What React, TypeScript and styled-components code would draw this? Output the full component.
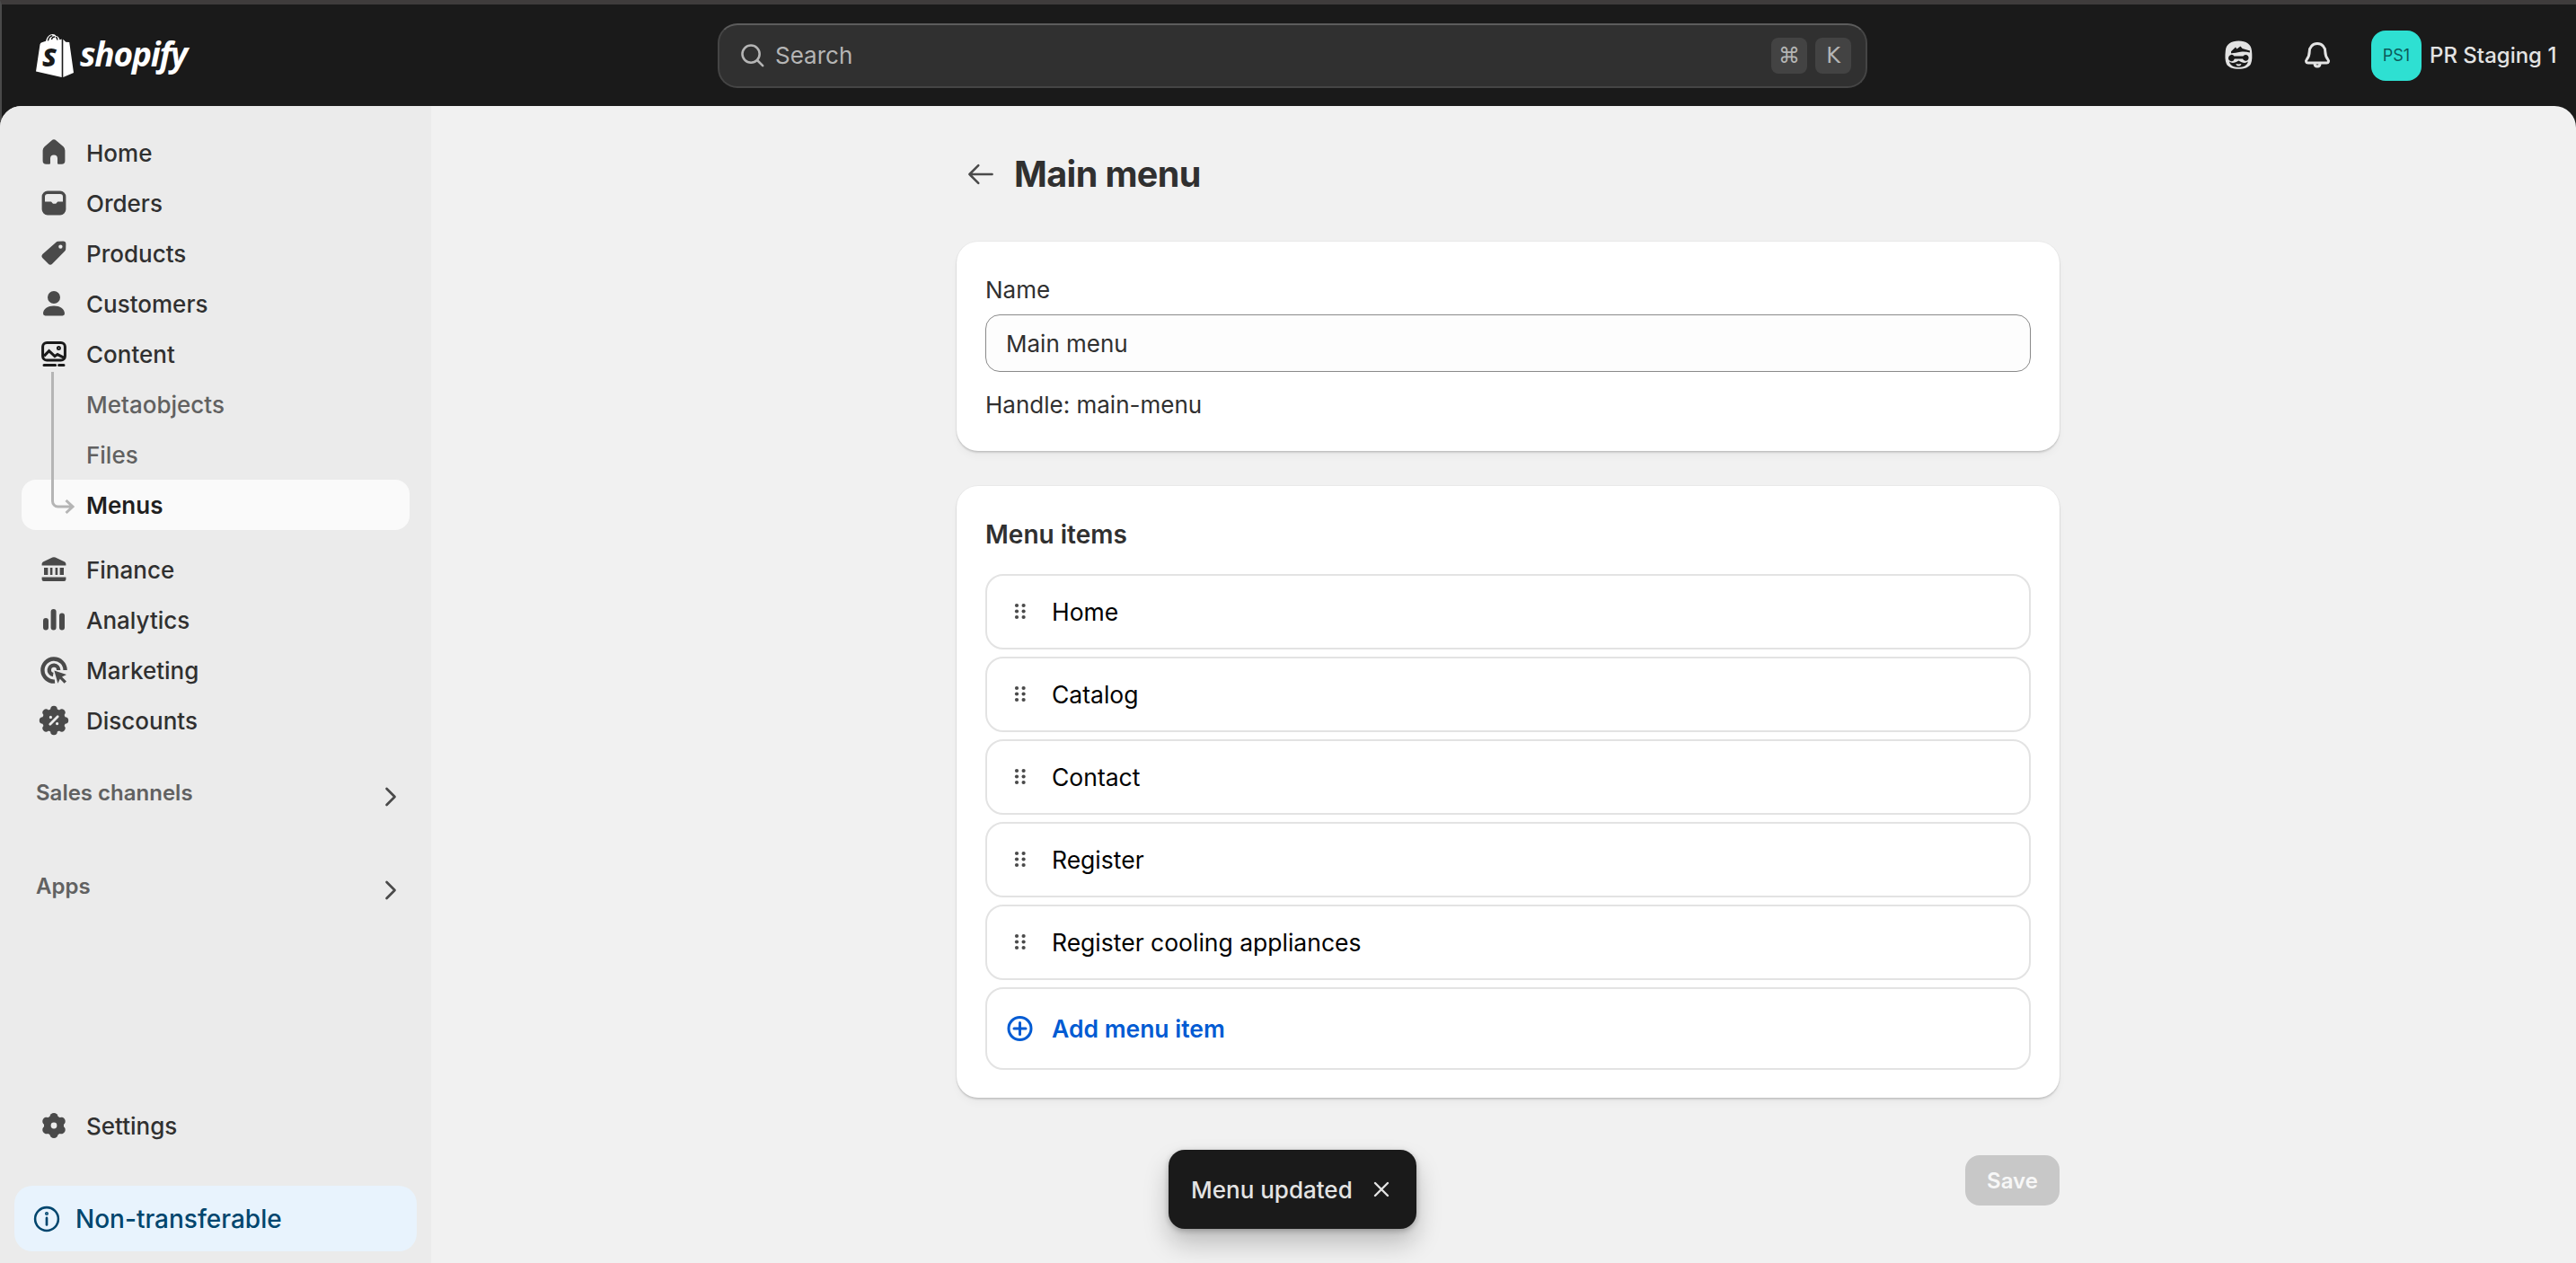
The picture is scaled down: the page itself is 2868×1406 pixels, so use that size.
import React from "react";
import styled, { createGlobalStyle } from "styled-components";

const Global = createGlobalStyle`
  html, body { margin: 0; padding: 0; height: 100%; }
  body { font-family: Inter, "Liberation Sans", sans-serif; background: #1a1a1a; overflow: hidden; }
  #root { height: 100%; }
`;

const Page = styled.div`
  height: 1406px;
  display: flex;
  flex-direction: column;
  background: #1a1a1a;
  border-top: 5px solid #3f3c3c;
  border-left: 2px solid #4a4a4a;
  box-sizing: border-box;
  position: relative;
`;

const TopBar = styled.header`
  height: 113px;
  flex: none;
  display: grid;
  grid-template-columns: 797px 1280px 1fr;
  align-items: center;
`;

const Brand = styled.div`
  display: flex;
  align-items: center;
  padding-left: 38px;
  gap: 7px;
`;

const Wordmark = styled.span`
  font-family: "Open Sans", sans-serif;
  font-style: italic;
  font-weight: 700;
  font-size: 37px;
  letter-spacing: -1.2px;
  color: #fff;
  line-height: 1;
  position: relative;
  top: -2px;
`;

const SearchBox = styled.div`
  height: 72px;
  box-sizing: border-box;
  display: flex;
  align-items: center;
  padding: 0 16px 0 21px;
  gap: 9px;
  border-radius: 22px;
  background: #303030;
  border: 2px solid #454545;
  border-top-color: #5c5c5c;
  color: #b5b5b5;
  font-size: 26px;
`;

const SearchText = styled.span`
  flex: 1;
`;

const Kbd = styled.span`
  width: 40px;
  height: 40px;
  display: flex;
  align-items: center;
  justify-content: center;
  border-radius: 8px;
  background: #434343;
  color: #b5b5b5;
  font-size: 24px;
  font-family: "DejaVu Sans", Inter, sans-serif;
`;

const TopRight = styled.div`
  display: flex;
  align-items: center;
  padding-left: 393px;
`;

const TopIcon = styled.div`
  width: 40px;
  height: 40px;
  flex: none;
  margin-right: 48px;
  &:nth-child(2) { margin-right: 40px; }
`;

const Avatar = styled.div`
  width: 56px;
  height: 56px;
  flex: none;
  border-radius: 16px;
  background: #2ee0d2;
  color: #0c5a5a;
  font-size: 18px;
  display: flex;
  align-items: center;
  justify-content: center;
`;

const ShopName = styled.span`
  margin-left: 9px;
  color: #e3e3e3;
  font-size: 24px;
  font-weight: 500;
  white-space: nowrap;
`;

const Body = styled.div`
  flex: 1;
  min-height: 0;
  display: flex;
  border-radius: 24px 24px 0 0;
  overflow: hidden;
  background: #f1f1f1;
  margin-left: -2px;
`;

const Sidebar = styled.nav`
  width: 480px;
  flex: none;
  box-sizing: border-box;
  background: #ebebeb;
  display: flex;
  flex-direction: column;
  padding: 24px 16px 13px 16px;
`;

const NavRow = styled.div<{ $active?: boolean; $sub?: boolean }>`
  height: 56px;
  flex: none;
  margin: 0 8px;
  padding-left: 16px;
  border-radius: 16px;
  display: flex;
  align-items: center;
  gap: 17px;
  position: relative;
  background: ${(p) => (p.$active ? "#fafafa" : "transparent")};
  color: ${(p) => (p.$active ? "#1f1f1f" : p.$sub ? "#616161" : "#303030")};
  font-size: 26px;
  font-weight: ${(p) => (p.$active ? 600 : 500)};
`;

const NavIcon = styled.svg`
  width: 40px;
  height: 40px;
  flex: none;
  margin-right: -1px;
  fill: #4a4a4a;
`;

const SubSpacer = styled.span`
  width: 40px;
  flex: none;
  margin-right: -1px;
`;

const TreeLine = styled.svg`
  position: absolute;
  left: 30px;
  width: 30px;
  height: 160px;
  bottom: 20px;
  fill: none;
  stroke: #b5b5b5;
  stroke-width: 3;
  overflow: visible;
`;

const SectionGap = styled.div`
  height: 16px;
  flex: none;
`;

const SectionRow = styled.div<{ $top: number }>`
  margin: ${(p) => p.$top}px 8px 0 8px;
  height: 44px;
  flex: none;
  padding: 0 6px 0 16px;
  display: flex;
  align-items: center;
  justify-content: space-between;
  color: #616161;
  font-size: 24px;
  font-weight: 600;
`;

const SideFill = styled.div`
  flex: 1;
`;

const Notice = styled.div`
  height: 73px;
  flex: none;
  margin: 39px 0 0 0;
  border-radius: 20px;
  background: #e8f3fd;
  box-sizing: border-box;
  padding-left: 21px;
  display: flex;
  align-items: center;
  gap: 17px;
  color: #00466e;
  font-size: 28px;
  font-weight: 500;
`;

const Main = styled.main`
  flex: 1;
  box-sizing: border-box;
  padding: 0 0 0 585px;
`;

const Column = styled.div`
  width: 1228px;
  display: flex;
  flex-direction: column;
`;

const TitleRow = styled.div`
  height: 151px;
  display: flex;
  align-items: center;
  padding-left: 9px;
  gap: 19px;
  box-sizing: border-box;
  color: #303030;
`;

const Title = styled.h1`
  margin: 0;
  font-size: 39.5px;
  font-weight: 700;
  letter-spacing: -0.6px;
`;

const Card = styled.section`
  background: #fff;
  border-radius: 24px;
  box-shadow: 0 2px 2px rgba(0, 0, 0, 0.14), 0 0 0 1px rgba(0, 0, 0, 0.03), 0 6px 8px rgba(0, 0, 0, 0.03);
  padding: 0 32px;
  box-sizing: border-box;
`;

const NameCard = styled(Card)`
  height: 233px;
  margin-bottom: 39px;
  padding-top: 37px;
`;

const FieldLabel = styled.div`
  color: #303030;
  font-size: 26px;
  line-height: 34px;
`;

const TextField = styled.div`
  height: 64px;
  margin-top: 10px;
  border: 1.5px solid #8a8a8a;
  border-radius: 16px;
  box-sizing: border-box;
  padding-left: 22px;
  display: flex;
  align-items: center;
  background: #fdfdfd;
  color: #303030;
  font-size: 26px;
`;

const FieldHint = styled.div`
  margin-top: 20px;
  color: #303030;
  font-size: 26px;
  line-height: 34px;
`;

const ItemsCard = styled(Card)`
  height: 681px;
  padding-top: 36px;
`;

const CardTitle = styled.h2`
  margin: 0 0 26px;
  font-size: 28px;
  font-weight: 600;
  line-height: 36px;
  color: #303030;
`;

const ItemList = styled.div`
  display: flex;
  flex-direction: column;
  gap: 8px;
`;

const ItemRow = styled.div<{ $add?: boolean }>`
  height: ${(p) => (p.$add ? 92 : 84)}px;
  flex: none;
  box-sizing: border-box;
  border: 2px solid #e3e3e3;
  border-radius: 20px;
  display: flex;
  align-items: center;
  padding-left: 17px;
  gap: 15px;
  color: ${(p) => (p.$add ? "#005bd3" : "#000")};
  font-size: 26.5px;
  font-weight: ${(p) => (p.$add ? 600 : 400)};
`;

const RowIcon = styled.svg`
  width: 40px;
  height: 40px;
  flex: none;
`;

const Footer = styled.div`
  display: flex;
  justify-content: flex-end;
  padding-top: 64px;
`;

const SaveButton = styled.button`
  width: 105px;
  height: 56px;
  border: 0;
  border-radius: 16px;
  background: #c8c8c8;
  color: #f7f7f7;
  font: 600 24px Inter, sans-serif;
`;

const Toast = styled.div`
  position: absolute;
  left: 1299px;
  top: 1275px;
  width: 276px;
  height: 88px;
  box-sizing: border-box;
  border-radius: 18px;
  background: #1a1a1a;
  color: #e3e3e3;
  display: flex;
  align-items: center;
  justify-content: space-between;
  padding: 0 29px 0 25px;
  font-size: 26px;
  font-weight: 500;
  white-space: nowrap;
  box-shadow: 0 16px 28px rgba(0, 0, 0, 0.22), 0 2px 6px rgba(0, 0, 0, 0.25);
`;

const navTop = [
  { label: "Home", d: "M8.7 3.2a2 2 0 0 1 2.6 0l4 3.4a3 3 0 0 1 .9 2.2v5.7a1.9 1.9 0 0 1-1.9 1.9h-1.8a.5.5 0 0 1-.5-.5v-2.7a2 2 0 0 0-4 0v2.7a.5.5 0 0 1-.5.5H5.7a1.9 1.9 0 0 1-1.9-1.9V8.800a3 3 0 0 1 1-2.2z" },
  { label: "Orders", d: "M6.500 3.300h7a3.200 3.200 0 0 1 3.200 3.200v7a3.200 3.200 0 0 1-3.200 3.200h-7a3.200 3.200 0 0 1-3.200-3.200v-7a3.200 3.200 0 0 1 3.200-3.200zm0 1.700a1.500 1.500 0 0 0-1.500 1.500v2.700h3.500l1 1.200h1.600l1-1.200H15V6.500A1.500 1.500 0 0 0 13.500 5z" },
  { label: "Products", d: "M11.200 3.900a1.500 1.500 0 0 1 1-.5l2.900-.100a1.600 1.600 0 0 1 1.600 1.600l-.1 2.900a1.500 1.500 0 0 1-.5 1l-6.900 7a1.700 1.700 0 0 1-2.400 0L3.800 12.800a1.700 1.700 0 0 1 0-2.400zM13.700 5.200a1.100 1.100 0 1 0 0 2.200 1.100 1.100 0 0 0 0-2.200z" },
  { label: "Customers", d: "M10 3a3.500 3.500 0 1 1 0 7 3.500 3.500 0 0 1 0-7zM10 11.200c3.300 0 6 1.700 6 4.300a1.200 1.200 0 0 1-1.200 1.200H5.200A1.200 1.200 0 0 1 4 15.500c0-2.600 2.700-4.300 6-4.300z" },
];

const navBottom = [
  { label: "Finance", d: "M9.200 3.300a2 2 0 0 1 1.600 0l5 2.300c.6.300.9.800.9 1.400v.8H3.300V7c0-.6.300-1.100.9-1.400zM4.500 9h2.200v4H4.500zM7.900 9h1.300v4H7.900zM10.800 9h1.300v4h-1.300zM13.300 9h2.200v4h-2.200zM3.300 14.200h13.400v1.300a1 1 0 0 1-1 1H4.300a1 1 0 0 1-1-1z" },
  { label: "Analytics", d: "M5.500 9A1.500 1.500 0 0 1 7 10.500v3.800a1.500 1.500 0 0 1-3 0v-3.800A1.500 1.500 0 0 1 5.500 9zM9.800 4a1.500 1.500 0 0 1 1.500 1.500v8.800a1.500 1.500 0 0 1-3 0V5.500A1.500 1.500 0 0 1 9.800 4zM14.500 6.300A1.500 1.500 0 0 1 16 7.800v6.500a1.500 1.500 0 0 1-3 0V7.800a1.500 1.500 0 0 1 1.500-1.500z" },
];

export default function App() {
  return (
    <Page>
      <Global />
      <TopBar>
        <Brand>
          <svg width="42" height="48" viewBox="0 0 42 48">
            <path fill="#fff" d="M0 41.500 4.500 11.500q.4-1.800 2-2.300L11 7.800C12 3.300 15 0 18.800 0c1.700 0 2.900.8 3.600 2 2 0 3.400 1.700 4 4.200l2.300-.7V48z" />
            <path fill="#fff" d="M30.300 5.700l3 3 3.900.4L42 43l-11.700 5z" />
            <path fill="none" stroke="#1a1a1a" strokeWidth="1.500" d="M13.400 7.400C14 4.500 16 2 18.300 1.800M17.300 6C18 4 19.800 3 21.200 3.100M22.400 3c.9 1 1.400 2.200 1.500 3.500" />
            <text x="7" y="36" fontFamily="'Open Sans', sans-serif" fontStyle="italic" fontWeight="800" fontSize="29" fill="#1a1a1a">S</text>
          </svg>
          <Wordmark>shopify</Wordmark>
        </Brand>
        <SearchBox>
          <svg width="32" height="32" viewBox="0 0 20 20" fill="none" stroke="#b5b5b5" strokeWidth="1.600" strokeLinecap="round">
            <circle cx="8.800" cy="8.800" r="6" />
            <path d="M13.300 13.300l3.700 3.700" />
          </svg>
          <SearchText>Search</SearchText>
          <Kbd>⌘</Kbd>
          <Kbd>K</Kbd>
        </SearchBox>
        <TopRight>
          <TopIcon>
            <svg width="40" height="40" viewBox="0 0 20 20">
              <path fill="#e3e3e3" d="M10.200 1.800c4.200 0 6.900 1.700 7.300 5.400.3 2.900.3 5.400-.5 7.300-.9 2-3.600 2.900-6.800 2.900s-5.900-.9-6.800-2.900c-.8-1.900-.8-4.400-.5-7.300.4-3.700 3.100-5.400 7.300-5.400z" />
              <path fill="#1a1a1a" d="M6 7.600 8.500 5.300l.7 1 2-1.600 1.100 1.300 4.200 1.300-.1 1c-1.600-.5-3.300-.7-5.200-.4-2 .3-3.700.8-5.200.7z" />
              <path fill="#1a1a1a" d="M4.600 10.800a1.700 1.700 0 0 1 3.100-.6h5a1.700 1.700 0 1 1-.2 1.600H7.900a1.700 1.700 0 0 1-3.300-1z" />
              <path fill="#1a1a1a" d="M5 13.300c1.500 1.200 3.400.6 5.200-.6 1.800 1.200 3.700 1.800 5.200.6-.3 2.100-2.300 3.200-5.200 3.200s-4.900-1.100-5.200-3.200z" />
              <path fill="#e3e3e3" d="M8.700 14.500c1 .3 2 .3 3 0-.2 1-.9 1.300-1.500 1.300s-1.300-.3-1.500-1.300z" />
            </svg>
          </TopIcon>
          <TopIcon>
            <svg width="40" height="40" viewBox="0 0 20 20" fill="none" stroke="#e3e3e3" strokeWidth="1.500" strokeLinejoin="round">
              <path d="M10 3.300c-2.700 0-4.400 2-4.400 4.500 0 2.200-.8 3.500-1.600 4.500-.5.600-.3 1.700.8 1.700h10.400c1.100 0 1.300-1.100.8-1.700-.8-1-1.600-2.300-1.600-4.500 0-2.500-1.700-4.500-4.400-4.500z" />
              <path d="M8.500 14.200c0 2.400 3 2.400 3 0" />
            </svg>
          </TopIcon>
          <Avatar>PS1</Avatar>
          <ShopName>PR Staging 1</ShopName>
        </TopRight>
      </TopBar>
      <Body>
        <Sidebar>
          {navTop.map((n) => (
            <NavRow key={n.label}>
              <NavIcon viewBox="0 0 20 20"><path fillRule="evenodd" d={n.d} /></NavIcon>
              {n.label}
            </NavRow>
          ))}
          <NavRow>
            <NavIcon viewBox="0 0 20 20">
              <g fill="none" stroke="#1a1a1a" strokeWidth="1.500">
                <rect x="3.800" y="3.700" width="12.400" height="9.800" rx="2.300" />
                <path d="M4.500 11.200 7.300 8.300l3.200 3 1.500-1 3.500 1.800" />
                <circle cx="12.700" cy="6.700" r=".5" />
                <path strokeLinecap="round" d="M4.500 16.300h6.300M12.800 16.300h2.700" />
              </g>
            </NavIcon>
            Content
          </NavRow>
          <NavRow $sub><SubSpacer />Metaobjects</NavRow>
          <NavRow $sub><SubSpacer />Files</NavRow>
          <NavRow $active>
            <TreeLine viewBox="0 0 30 160">
              <path d="M4.500 4V148a6 6 0 0 0 6 6H26M19.500 147l7.500 7-7.500 7" />
            </TreeLine>
            <SubSpacer />Menus
          </NavRow>
          <SectionGap />
          {navBottom.map((n) => (
            <NavRow key={n.label}>
              <NavIcon viewBox="0 0 20 20"><path fillRule="evenodd" d={n.d} /></NavIcon>
              {n.label}
            </NavRow>
          ))}
          <NavRow>
            <NavIcon viewBox="0 0 20 20">
              <g fill="none" stroke="#4a4a4a" strokeWidth="2.200">
                <path d="M16.300 10a6.300 6.300 0 1 0-5.800 6.300" />
                <path d="M12.600 10a2.600 2.600 0 1 0-3 2.500" />
              </g>
              <path d="M10.200 10.200l6.800 2.300-2.500 1.200 2.500 2.500-1.200 1.200-2.400-2.500-1.200 2.500z" />
            </NavIcon>
            Marketing
          </NavRow>
          <NavRow>
            <NavIcon viewBox="0 0 20 20">
              <circle cx="10" cy="10" r="6.500" />
              {[0, 45, 90, 135, 180, 225, 270, 315].map((a) => (
                <circle key={a} cx="10" cy="3.800" r="1.900" transform={`rotate(${a} 10 10)`} />
              ))}
              <g stroke="#ebebeb" fill="#ebebeb">
                <path strokeWidth="1.400" strokeLinecap="round" d="M12.100 7.900l-4.200 4.200" />
                <circle cx="8.200" cy="8.200" r=".5" strokeWidth=".6" />
                <circle cx="11.800" cy="11.800" r=".5" strokeWidth=".6" />
              </g>
            </NavIcon>
            Discounts
          </NavRow>
          <SectionRow $top={30}>
            Sales channels
            <ChevronIcon />
          </SectionRow>
          <SectionRow $top={60}>
            Apps
            <ChevronIcon />
          </SectionRow>
          <SideFill />
          <NavRow>
            <NavIcon viewBox="0 0 20 20">
              <circle cx="10" cy="10" r="5.500" />
              {[0, 60, 120, 180, 240, 300].map((a) => (
                <circle key={a} cx="10" cy="5.300" r="2.300" transform={`rotate(${a} 10 10)`} />
              ))}
              <circle cx="10" cy="10" r="1.700" fill="#ebebeb" />
            </NavIcon>
            Settings
          </NavRow>
          <Notice>
            <svg width="30" height="30" viewBox="0 0 20 20" fill="none" stroke="#00466e" strokeWidth="1.700">
              <circle cx="10" cy="10" r="8.600" />
              <path strokeLinecap="round" d="M10 9.300v5" strokeWidth="1.800" />
              <circle cx="10" cy="6" r=".5" />
            </svg>
            Non-transferable
          </Notice>
        </Sidebar>
        <Main>
          <Column>
            <TitleRow>
              <svg width="36" height="36" viewBox="0 0 20 20" fill="none" stroke="#4a4a4a" strokeWidth="1.400" strokeLinecap="round" strokeLinejoin="round">
                <path d="M17 10H3M8.500 4.500 3 10l5.500 5.500" />
              </svg>
              <Title>Main menu</Title>
            </TitleRow>
            <NameCard>
              <FieldLabel>Name</FieldLabel>
              <TextField>Main menu</TextField>
              <FieldHint>Handle: main-menu</FieldHint>
            </NameCard>
            <ItemsCard>
              <CardTitle>Menu items</CardTitle>
              <ItemList>
                {["Home", "Catalog", "Contact", "Register", "Register cooling appliances"].map((t) => (
                  <ItemRow key={t}>
                    <RowIcon viewBox="0 0 40 40" fill="#4a4a4a">
                      {[13, 19.500, 26].map((y) => (
                        <g key={y}>
                          <circle cx="16" cy={y} r="2.100" />
                          <circle cx="23.600" cy={y} r="2.100" />
                        </g>
                      ))}
                    </RowIcon>
                    {t}
                  </ItemRow>
                ))}
                <ItemRow $add>
                  <RowIcon viewBox="0 0 40 40" fill="none" stroke="#005bd3" strokeWidth="3" strokeLinecap="round">
                    <circle cx="19.500" cy="20" r="12.500" />
                    <path d="M19.500 13.500v13M13 20h13" />
                  </RowIcon>
                  Add menu item
                </ItemRow>
              </ItemList>
            </ItemsCard>
            <Footer>
              <SaveButton>Save</SaveButton>
            </Footer>
          </Column>
        </Main>
      </Body>
      <Toast>
        Menu updated
        <svg width="20" height="20" viewBox="0 0 20 20" fill="none" stroke="#e3e3e3" strokeWidth="2.400" strokeLinecap="round">
          <path d="M3 3l14 14M17 3L3 17" />
        </svg>
      </Toast>
    </Page>
  );
}

function ChevronIcon() {
  return (
    <svg width="30" height="30" viewBox="0 0 20 20" fill="none" stroke="#4a4a4a" strokeWidth="1.800" strokeLinecap="round" strokeLinejoin="round" style={{ marginTop: 10 }}>
      <path d="M7 4l6 6-6 6" />
    </svg>
  );
}
